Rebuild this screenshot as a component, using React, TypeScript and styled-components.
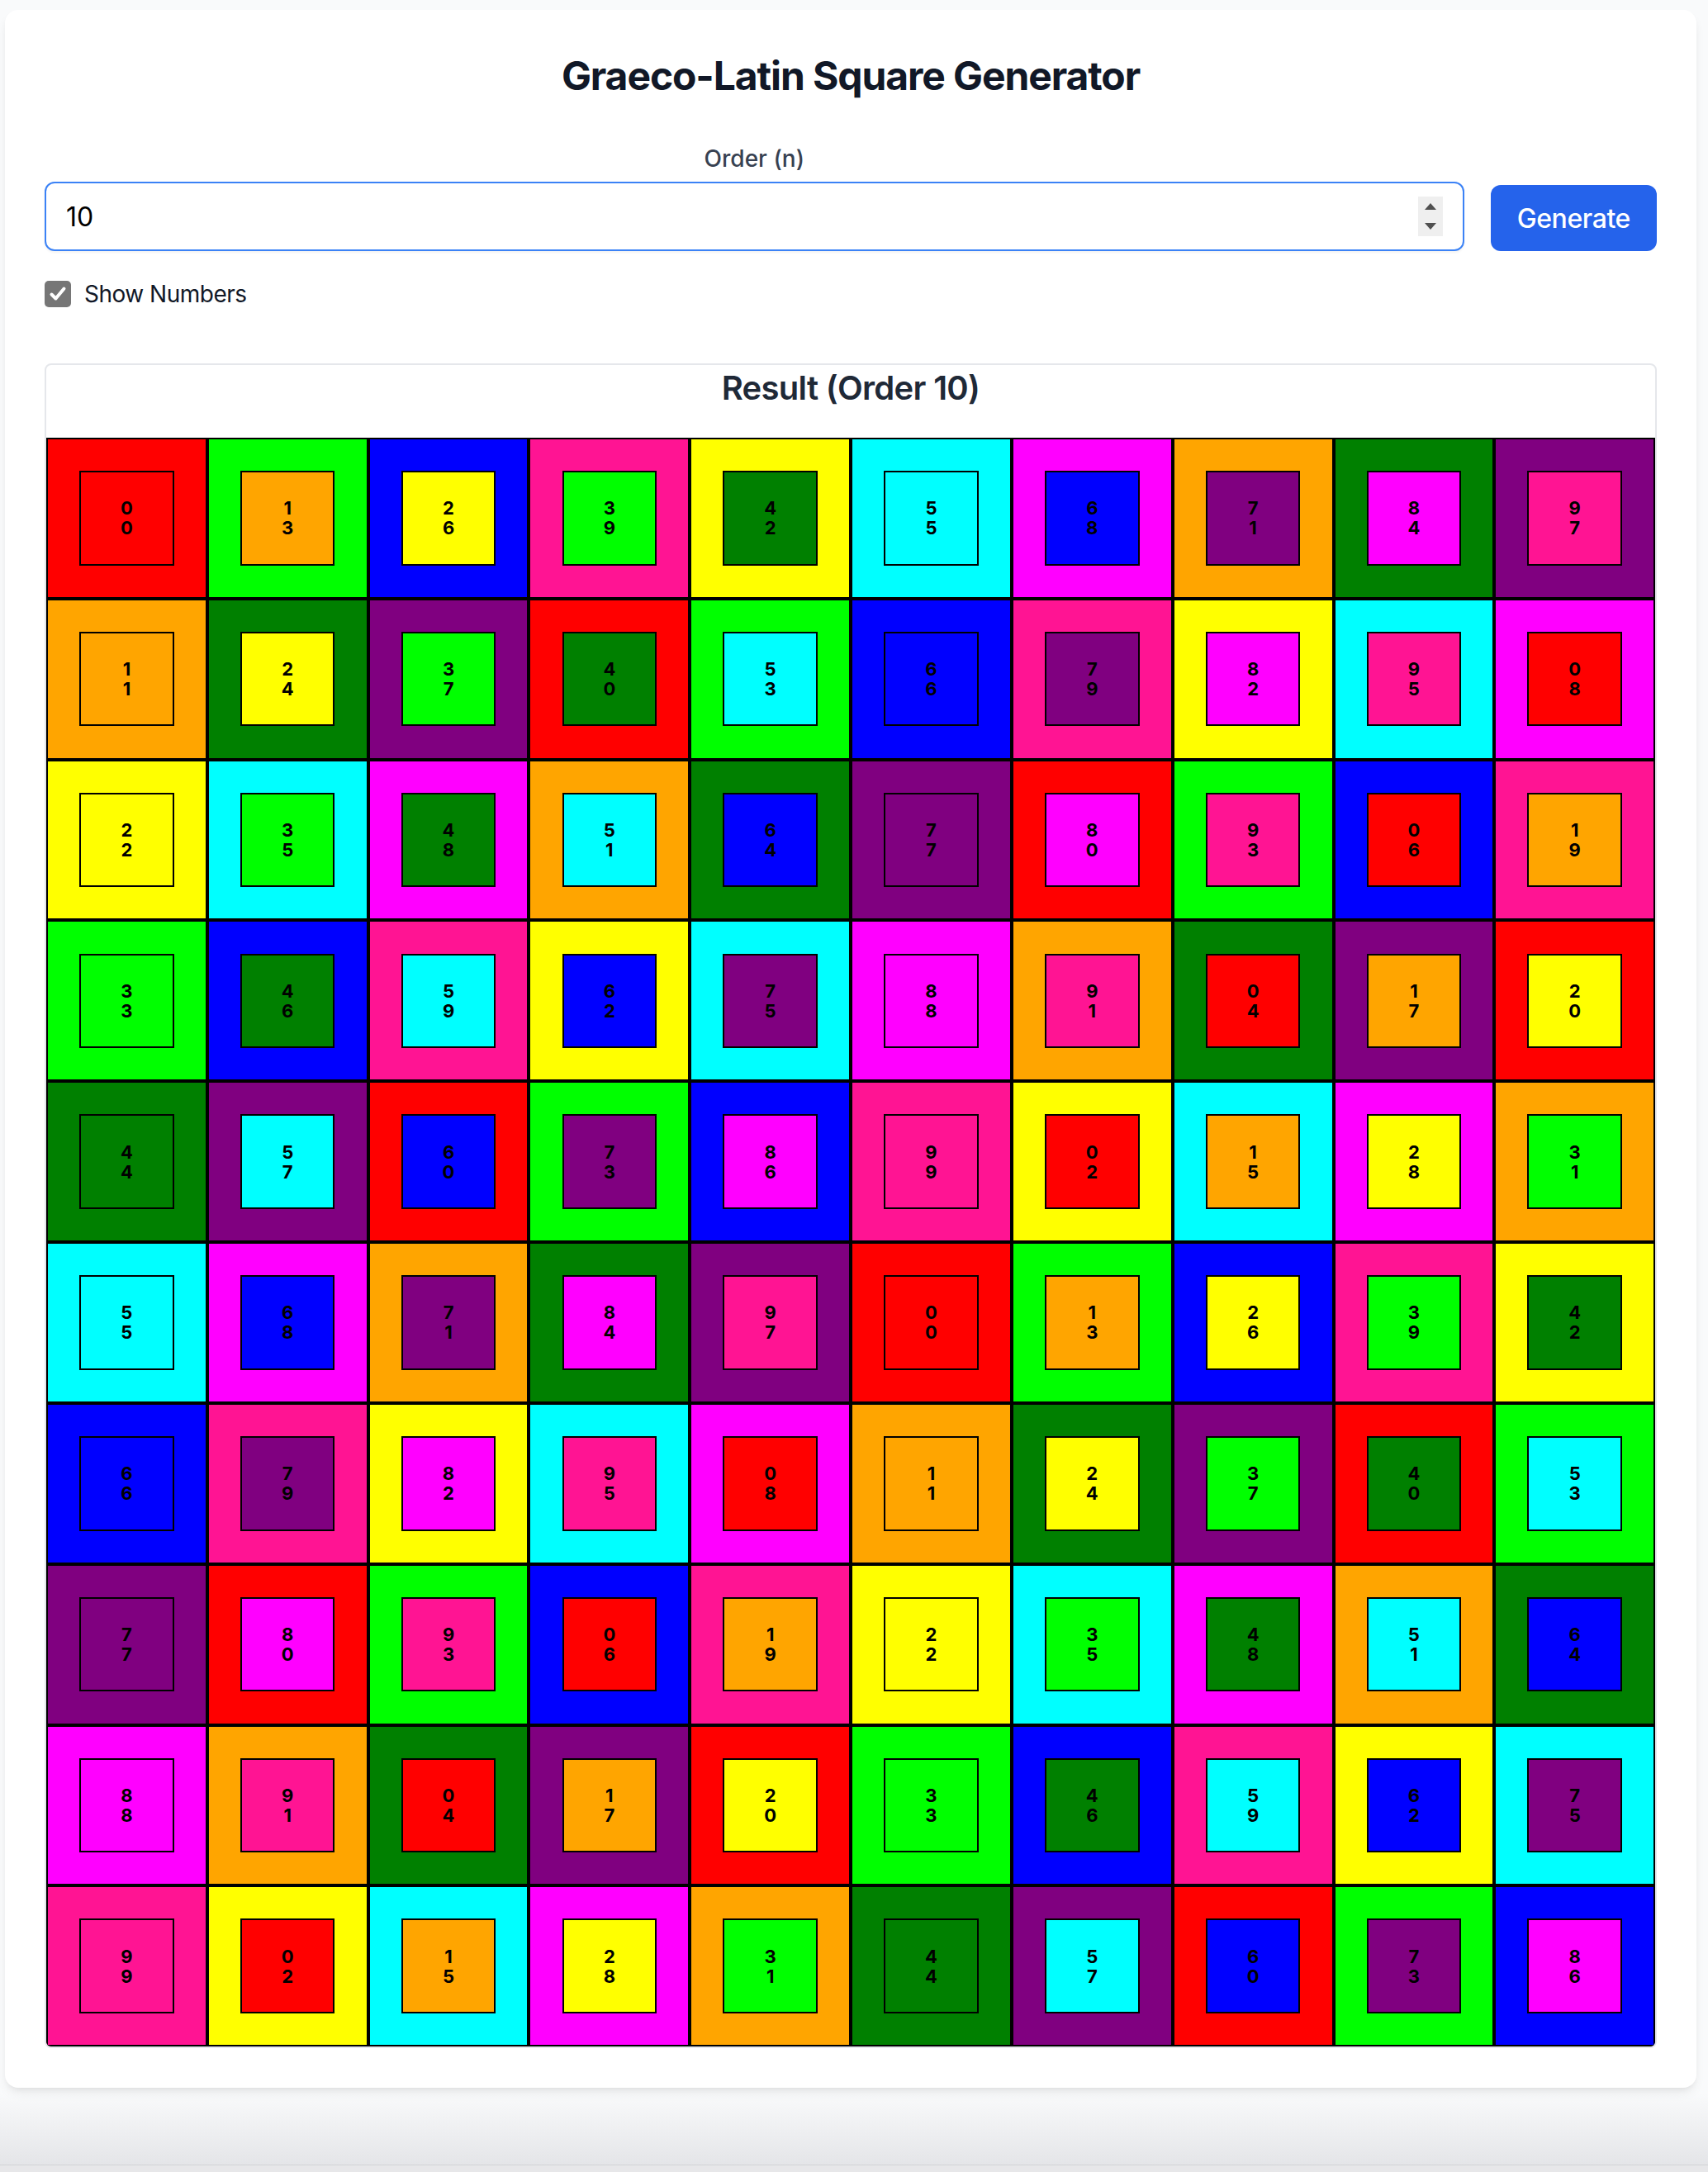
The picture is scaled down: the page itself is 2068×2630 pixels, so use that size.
import React, { useState } from "react";
import styled, { createGlobalStyle } from "styled-components";

const GlobalStyle = createGlobalStyle`
  html, body {
    margin: 0;
    padding: 0;
    background: #e7e7e9;
  }
  body {
    font-family: Inter, "Noto Sans", "Liberation Sans", sans-serif;
    -webkit-font-smoothing: antialiased;
  }
  * { box-sizing: border-box; }
`;

const PALETTE = [
  "#ff0000", // red
  "#00ff00", // lime
  "#0000ff", // blue
  "#ff1493", // deeppink
  "#ffff00", // yellow
  "#00ffff", // cyan
  "#ff00ff", // magenta
  "#ffa500", // orange
  "#008000", // green
  "#800080", // purple
];

const Page = styled.div`
  min-height: 2622px;
  padding: 12px 14px 0 6px;
  background: linear-gradient(to bottom, #f9fafb 0, #f9fafb 2535px, #e4e5e8 2622px);
  border-bottom: 1px solid #d2d3d6;
`;

const Card = styled.main`
  width: 2048px;
  background: #ffffff;
  border-radius: 16px;
  padding: 48px;
  box-shadow: 0 8px 14px -3px rgba(0, 0, 0, 0.08), 0 4px 8px -4px rgba(0, 0, 0, 0.08);
`;

const Title = styled.h1`
  margin: 0 0 48px;
  font-size: 48px;
  line-height: 64px;
  font-weight: 700;
  letter-spacing: -1.1px;
  color: #111827;
  text-align: center;
`;

const Controls = styled.div`
  display: flex;
  align-items: flex-end;
  gap: 32px;
`;

const Field = styled.div`
  flex: 1;
  display: flex;
  flex-direction: column;
`;

const FieldLabel = styled.label`
  display: block;
  text-align: center;
  font-size: 28px;
  line-height: 40px;
  font-weight: 500;
  color: #374151;
  margin-bottom: 8px;
`;

const InputWrap = styled.div`
  position: relative;
`;

const NumberInput = styled.input`
  display: block;
  width: 100%;
  height: 84px;
  border: 2px solid #3b82f6;
  border-radius: 12px;
  padding: 0 24px;
  font-family: inherit;
  font-size: 32px;
  color: #000;
  background: #fff;
  outline: none;
  box-shadow: 0 2px 3px rgba(0, 0, 0, 0.05);
  -moz-appearance: textfield;
  &::-webkit-outer-spin-button,
  &::-webkit-inner-spin-button {
    -webkit-appearance: none;
    margin: 0;
  }
`;

const Spinner = styled.div`
  position: absolute;
  right: 26px;
  top: 18px;
  width: 30px;
  height: 48px;
  background: #efefef;
  display: flex;
  flex-direction: column;
  align-items: center;
  justify-content: space-between;
  padding: 8px 0;
`;

const GenerateButton = styled.button`
  height: 80px;
  padding: 0 32px;
  border: none;
  border-radius: 12px;
  background: #2563eb;
  color: #ffffff;
  font-family: inherit;
  font-size: 32px;
  font-weight: 500;
  letter-spacing: -0.4px;
  cursor: pointer;
`;

const CheckRow = styled.label`
  display: flex;
  align-items: center;
  margin-top: 32px;
  height: 40px;
  cursor: pointer;
`;

const HiddenCheck = styled.input`
  position: absolute;
  opacity: 0;
  width: 0;
  height: 0;
`;

const CheckBox = styled.span<{ $on: boolean }>`
  width: 32px;
  height: 32px;
  border-radius: 5px;
  background: ${(p) => (p.$on ? "#767676" : "#ffffff")};
  border: ${(p) => (p.$on ? "none" : "2px solid #767676")};
  display: flex;
  align-items: center;
  justify-content: center;
`;

const CheckText = styled.span`
  margin-left: 16px;
  font-size: 28px;
  line-height: 40px;
  letter-spacing: -0.5px;
  color: #111827;
`;

const ResultBox = styled.section`
  margin-top: 64px;
  border: 2px solid #e5e7eb;
  border-radius: 8px;
  overflow: hidden;
`;

const ResultTitle = styled.h2`
  margin: 0 0 32px;
  font-size: 40px;
  line-height: 56px;
  font-weight: 600;
  letter-spacing: -0.7px;
  color: #1f2937;
  text-align: center;
`;

const Grid = styled.div<{ $n: number }>`
  display: grid;
  grid-template-columns: repeat(${(p) => p.$n}, 1fr);
`;

const Cell = styled.div<{ $bg: string }>`
  aspect-ratio: 1 / 1;
  border: 2px solid #000;
  background: ${(p) => p.$bg};
  display: flex;
  align-items: center;
  justify-content: center;
`;

const Inner = styled.div<{ $bg: string }>`
  width: 60%;
  height: 60%;
  border: 2px solid #000;
  background: ${(p) => p.$bg};
  display: flex;
  flex-direction: column;
  align-items: center;
  justify-content: center;
  font-size: 22px;
  line-height: 24px;
  font-weight: 700;
  color: #000;
`;

const Arrow = ({ up }: { up?: boolean }) => (
  <svg width="14" height="8" viewBox="0 0 14 8">
    <polygon points={up ? "7,0 14,8 0,8" : "0,0 14,0 7,8"} fill="#505050" />
  </svg>
);

export default function App() {
  const [order, setOrder] = useState("10");
  const [showNumbers, setShowNumbers] = useState(true);
  const n = 10;

  const cells = [];
  for (let i = 0; i < n; i++) {
    for (let j = 0; j < n; j++) {
      const outer = PALETTE[(7 * i + j) % 10];
      const inner = PALETTE[(7 * i + 7 * j) % 10];
      const a = (i + j) % 10;
      const b = (i + 3 * j) % 10;
      cells.push(
        <Cell key={`${i}-${j}`} $bg={outer}>
          <Inner $bg={inner}>
            {showNumbers && (
              <>
                <span>{a}</span>
                <span>{b}</span>
              </>
            )}
          </Inner>
        </Cell>
      );
    }
  }

  return (
    <>
      <GlobalStyle />
      <Page>
        <Card>
          <Title>Graeco-Latin Square Generator</Title>
          <Controls>
            <Field>
              <FieldLabel htmlFor="order">Order (n)</FieldLabel>
              <InputWrap>
                <NumberInput
                  id="order"
                  type="number"
                  value={order}
                  onChange={(e) => setOrder(e.target.value)}
                />
                <Spinner>
                  <Arrow up />
                  <Arrow />
                </Spinner>
              </InputWrap>
            </Field>
            <GenerateButton>Generate</GenerateButton>
          </Controls>
          <CheckRow>
            <HiddenCheck
              type="checkbox"
              checked={showNumbers}
              onChange={(e) => setShowNumbers(e.target.checked)}
            />
            <CheckBox $on={showNumbers}>
              {showNumbers && (
                <svg width="22" height="22" viewBox="0 0 22 22">
                  <path
                    d="M3.5 11.5 L8.5 16.5 L18.5 4.5"
                    fill="none"
                    stroke="#ffffff"
                    strokeWidth="4"
                    strokeLinecap="round"
                    strokeLinejoin="round"
                  />
                </svg>
              )}
            </CheckBox>
            <CheckText>Show Numbers</CheckText>
          </CheckRow>
          <ResultBox>
            <ResultTitle>Result (Order {n})</ResultTitle>
            <Grid $n={n}>{cells}</Grid>
          </ResultBox>
        </Card>
      </Page>
    </>
  );
}
